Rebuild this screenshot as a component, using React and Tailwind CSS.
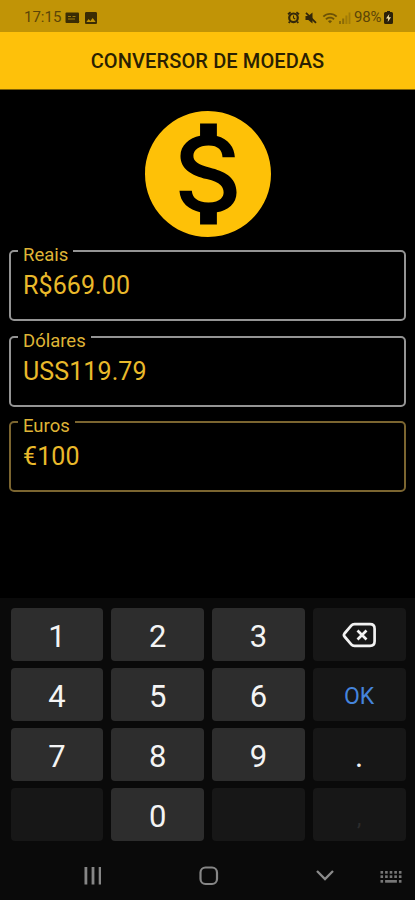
import React from "react";
import { MdWifi, MdImage } from "react-icons/md";

function StatusBar() {
  return (
    <div className="flex h-8 items-center justify-between bg-[#c19406] pl-6 pr-[22px] pt-[3px] text-[#5c4506]">
      <div className="flex items-center">
        <span className="w-[41px] text-[15px] leading-none">17:15</span>
        <svg className="h-3 w-[15px]" viewBox="0 0 15 12">
          <rect x="0.5" y="0.5" width="13.5" height="10.5" rx="1" fill="#3a2c04" />
          <path d="M3 4.5h3M7.5 4.5h3M3 7h7" stroke="#a17c08" strokeWidth="1.2" />
          <circle cx="12.5" cy="9.5" r="1.8" fill="#3a2c04" />
        </svg>
        <MdImage className="ml-[3px] size-4 text-[#3a2c04]" />
      </div>
      <div className="flex items-center">
        <svg className="h-[13px] w-[13px]" viewBox="0 0 13 13" fill="none" stroke="#33270a">
          <circle cx="6.5" cy="6.8" r="4.3" strokeWidth="2.2" />
          <path d="M1 3.200l2.600-2M12 3.200l-2.600-2M2.800 10.500l-1 1.500M10.200 10.500l1 1.500" strokeWidth="1.8" />
          <path d="M6.500 4.500v2.500l1.700 1" strokeWidth="1.1" />
        </svg>
        <svg className="ml-[5px] h-3 w-3" viewBox="0 0 12 12" fill="#33270a">
          <path d="M0.500 4h2.800L7.500 0.500v11L3.300 8H0.500z" />
          <path d="M1 0.800l10 10" stroke="#33270a" strokeWidth="1.700" />
        </svg>
        <MdWifi className="ml-[5px] size-4 text-[#6b5207]" />
        <svg className="ml-px h-3 w-3" viewBox="0 0 12 12" fill="#8a6a07">
          <rect x="0" y="9" width="2" height="3" />
          <rect x="3.2" y="6.5" width="2" height="5.5" />
          <rect x="6.4" y="3.5" width="2" height="8.5" opacity=".6" />
          <rect x="9.6" y="0.5" width="1.8" height="11.5" opacity=".6" />
        </svg>
        <span className="ml-[3px] w-[30px] text-[15px] leading-none tracking-[-0.2px]">98%</span>
        <svg className="h-[13px] w-[9px]" viewBox="0 0 9 13">
          <path d="M3 0h3v1h1.500q1.500 0 1.500 1.500v9q0 1.500-1.500 1.500h-6q-1.500 0-1.500-1.500v-9q0-1.500 1.500-1.500h1.500z" fill="#2c2108" />
          <path d="M5.300 3 2 7.500h2.200L3.700 11 7 6.300H4.800z" fill="#f2dfa4" />
        </svg>
      </div>
    </div>
  );
}

function Field({ label, value, active }) {
  return (
    <fieldset
      className={`h-[71px] rounded-[5px] border-2 pl-[3px] ${active ? "border-[#7b6530]" : "border-[#949494]"}`}
    >
      <legend className="ml-1 h-[2px] pl-[5px] pr-[5px] text-[18.5px] leading-[11px] text-[#dfb436]">
        {label}
      </legend>
      <div className="pl-[9px] pt-[18px] text-[25px] leading-[31px] tracking-[0.1px] text-[#e9b92b]">{value}</div>
    </fieldset>
  );
}

function Key({ children, dark }) {
  return (
    <div
      className={`flex h-[53px] items-center justify-center rounded-[4px] pt-[3px] text-[31px] leading-none text-[#f4f4f4] ${dark ? "bg-[#171717]" : "bg-[#2d2d2d]"}`}
    >
      {children}
    </div>
  );
}

function Backspace() {
  return (
    <svg className="mb-[2px] h-[26px] w-[34px]" viewBox="0 0 34 26" fill="none" stroke="#f2f2f2" strokeWidth="2.7" strokeLinejoin="round">
      <path d="M12.500 2.200H28q4.600 0 4.600 4.600v12.400q0 4.600-4.600 4.600H12.500q-2 0-3.300-1.500L2.500 14.500q-1.200-1.500 0-3L9.200 3.700q1.300-1.500 3.300-1.500z" />
      <path d="M15.500 8.500l9 9M24.500 8.500l-9 9" />
    </svg>
  );
}

function NavBar() {
  return (
    <div className="grid h-[59px] grid-cols-[185px_47px_186px] items-center pt-[10px]">
      <svg className="ml-[84px] h-[18px] w-[18px]" viewBox="0 0 18 18" fill="#868686">
        <rect x="0.500" width="2.800" height="17.500" />
        <rect x="7.600" width="2.800" height="17.500" />
        <rect x="14.700" width="2.300" height="17.500" />
      </svg>
      <svg className="ml-[14px] h-5 w-5" viewBox="0 0 20 20" fill="none" stroke="#868686" strokeWidth="2.200">
        <rect x="1.500" y="1.500" width="16.500" height="16.500" rx="5" />
      </svg>
      <div className="flex items-center pl-[84px]">
        <svg className="h-[11px] w-[18px]" viewBox="0 0 18 11" fill="none" stroke="#8b8b8b" strokeWidth="2.300">
          <path d="M1 1l8 8 8-8" />
        </svg>
        <svg className="ml-[46px] mt-[3px] h-[13px] w-[22px]" viewBox="0 0 22 13" fill="#777777">
          {[0, 1, 2, 3, 4].map((c) =>
            [0, 1].map((r) => (
              <rect key={`${c}-${r}`} x={0.5 + c * 4.600} y={r * 4.300} width="2.600" height="2.700" />
            ))
          )}
          <rect x="0.500" y="9" width="2.600" height="2.700" />
          <rect x="5.100" y="9" width="11.800" height="2.700" />
          <rect x="18.900" y="9" width="2.600" height="2.700" />
        </svg>
      </div>
    </div>
  );
}

export default function App() {
  return (
    <div className="flex h-[900px] w-[415px] flex-col overflow-hidden bg-black font-['Roboto',sans-serif]">
      <StatusBar />
      <header className="flex h-[58px] items-center justify-center border-b border-[#7f6106] bg-[#fec10a] pt-px text-[20px] font-medium leading-none tracking-[0.12px] text-[#2a1f02]">
        CONVERSOR DE MOEDAS
      </header>
      <main className="flex flex-1 flex-col px-[9px] pt-[21px]">
        <svg className="mx-auto size-[126px]" viewBox="2 2 20 20" fill="#fec107">
          <path d="M12 2C6.480 2 2 6.480 2 12s4.480 10 10 10 10-4.480 10-10S17.520 2 12 2zm1.410 16.090V20h-2.670v-1.930c-1.710-.36-3.160-1.460-3.270-3.400h1.960c.1 1.050.82 1.870 2.650 1.870 1.960 0 2.400-.98 2.400-1.590 0-.83-.44-1.610-2.670-2.140-2.480-.6-4.180-1.620-4.180-3.670 0-1.720 1.390-2.840 3.110-3.210V4h2.670v1.950c1.860.45 2.790 1.860 2.850 3.390H14.300c-.05-1.110-.64-1.870-2.220-1.870-1.500 0-2.400.68-2.400 1.640 0 .84.65 1.390 2.670 1.910s4.180 1.390 4.180 3.910c-.01 1.830-1.380 2.830-3.120 3.160z" />
        </svg>
        <div className="mt-[13px] flex flex-col gap-[14.500px]">
          <Field label="Reais" value="R$669.00" />
          <Field label="Dólares" value="USS119.79" />
          <Field label="Euros" value="€100" active />
        </div>
      </main>
      <section className="h-[302px] bg-[#0a0a0a] pt-[10px]">
        <div className="grid grid-cols-4 gap-x-2 gap-y-[7px] pl-[10.5px] pr-[9.5px]">
          <Key>1</Key>
          <Key>2</Key>
          <Key>3</Key>
          <Key dark><Backspace /></Key>
          <Key>4</Key>
          <Key>5</Key>
          <Key>6</Key>
          <Key dark><span className="text-[23px] text-[#4584dc]">OK</span></Key>
          <Key>7</Key>
          <Key>8</Key>
          <Key>9</Key>
          <Key dark>.</Key>
          <Key dark />
          <Key>0</Key>
          <Key dark />
          <Key dark><span className="pt-1 text-[22px] text-[#2c2c2c]">,</span></Key>
        </div>
        <NavBar />
      </section>
    </div>
  );
}
